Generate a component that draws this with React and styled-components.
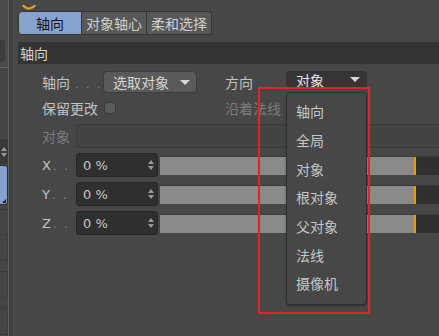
import React from "react";
import styled, { createGlobalStyle } from "styled-components";

const GlobalStyle = createGlobalStyle`
  html, body {
    margin: 0;
    padding: 0;
    background: #474747;
  }
`;

const CJK = `"Noto Sans CJK SC", "Noto Sans", sans-serif`;
const LATIN = `"DejaVu Sans", "Noto Sans", sans-serif`;

const Page = styled.div`
  display: flex;
  width: 439px;
  height: 336px;
  overflow: hidden;
  background: #474747;
  font-family: ${CJK};
  font-size: 14px;
  color: #c4c4c4;
`;

/* left neighbour panel, mostly cut off */
const Side = styled.div`
  width: 8px;
  display: flex;
  flex-direction: column;
  border-right: 1px solid #5f5f5f;
  background: #454545;
`;

const SideTop = styled.div`
  height: 68px;
  padding-top: 40px;
  box-sizing: border-box;
  background: #4b4b4b;
  border-bottom: 1px solid #676767;
`;

const SideInner = styled.div`
  width: 5px;
  height: 22px;
  background: #3e3e3e;
  border-radius: 0 3px 3px 0;
`;

const SideSpin = styled.div`
  margin-top: 71px;
  height: 25px;
  background: #383838;
  border-radius: 0 3px 3px 0;
  display: flex;
  flex-direction: column;
  align-items: center;
  justify-content: center;
  gap: 2px;
`;

const SideBlue = styled.div`
  position: relative;
  margin-top: 1px;
  height: 38px;
  background: #86a2cc;
  border: 1px solid #2c2c2c;
  border-left: none;
  border-radius: 0 3px 3px 0;
`;

const Corner = styled.div`
  position: absolute;
  right: 1px;
  bottom: 1px;
  width: 0;
  height: 0;
  border-left: 4px solid transparent;
  border-bottom: 4px solid #1d1d1d;
`;

const SideLine = styled.div`
  margin-top: 4px;
  height: 1px;
  background: #363636;
`;

const SideSlot = styled.div`
  margin-top: ${(p) => p.$gap}px;
  height: 25px;
  border: 1px solid #3d3d3d;
  border-left: none;
`;

const Gutter = styled.div`
  width: 4px;
  background: #424242;
  border-right: 1px solid #525252;
`;

const Main = styled.div`
  flex: 1;
  display: flex;
  flex-direction: column;
  padding-left: 4px;
  min-width: 0;
`;

const TopStrip = styled.div`
  height: 11px;
  padding-left: 4px;
`;

const Tabs = styled.div`
  display: flex;
  height: 24px;
`;

const Tab = styled.div`
  width: ${(p) => p.$w}px;
  box-sizing: border-box;
  display: flex;
  align-items: center;
  justify-content: center;
  background: ${(p) => (p.$active ? "#87a3cd" : "#585858")};
  color: ${(p) => (p.$active ? "#141414" : "#cfcfcf")};
  border: 1px solid #353535;
  border-left-width: ${(p) => (p.$first ? 1 : 0)}px;
  border-radius: ${(p) =>
    p.$first ? "4px 0 0 4px" : p.$last ? "0 4px 4px 0" : "0"};
  font-size: 14px;
`;

const Header = styled.div`
  margin-top: 7px;
  height: 22px;
  background: #333333;
  padding-left: 2px;
  display: flex;
  align-items: center;
  color: #d2d2d2;
  font-size: 14px;
`;

const Body = styled.div`
  display: flex;
  flex-direction: column;
  padding-left: 24px;
`;

const Row = styled.div`
  display: flex;
  align-items: center;
  height: ${(p) => p.$h}px;
  margin-top: ${(p) => p.$mt}px;
`;

const Cell = styled.div`
  display: flex;
  align-items: center;
  width: ${(p) => (p.$w ? `${p.$w}px` : "auto")};
  height: 100%;
`;

const Label = styled.div`
  width: ${(p) => p.$w}px;
  flex-shrink: 0;
  white-space: nowrap;
  color: ${(p) => (p.$dim ? "#7b7b7b" : "#c2c2c2")};
  font-family: ${(p) => (p.$latin ? LATIN : CJK)};
  font-size: ${(p) => (p.$latin ? "13px" : "14px")};
`;

const Dots = styled.span`
  font-family: ${LATIN};
  font-size: 11px;
  color: #8c8c8c;
  letter-spacing: 2px;
  margin-left: ${(p) => p.$ml ?? 5}px;
`;

const DropWrap = styled.div`
  position: relative;
  align-self: flex-start;
`;

const Dropdown = styled.div`
  width: ${(p) => p.$w}px;
  height: ${(p) => p.$h}px;
  box-sizing: border-box;
  display: flex;
  align-items: center;
  justify-content: space-between;
  padding: 0 6px 0 9px;
  background: ${(p) => (p.$open ? "#353535" : "#5a5a5a")};
  color: ${(p) => (p.$open ? "#e6e6e6" : "#d6d6d6")};
  border: 1px solid ${(p) => (p.$open ? "#333333" : "#3c3c3c")};
  border-radius: 4px;
  font-size: 14px;
`;

const Arrow = styled.div`
  width: 0;
  height: 0;
  border-left: 5px solid transparent;
  border-right: 5px solid transparent;
  border-top: 5px solid #d8d8d8;
`;

const Menu = styled.div`
  position: absolute;
  left: 0;
  top: 21px;
  width: 81px;
  height: 213px;
  box-sizing: border-box;
  padding-top: 4px;
  background: #474747;
  border: 1px solid #2e2e2e;
  border-radius: 4px;
  box-shadow: 0 1px 2px rgba(0, 0, 0, 0.35);
  z-index: 2;
`;

const MenuItem = styled.div`
  height: 28.7px;
  display: flex;
  align-items: center;
  padding-left: 9px;
  color: #c6c6c6;
  font-size: 14px;
`;

const Marker = styled.div`
  position: absolute;
  left: -28px;
  top: 16px;
  width: 112px;
  height: 227px;
  box-sizing: border-box;
  border: 2px solid #e4222b;
  pointer-events: none;
  z-index: 3;
`;

const Check = styled.div`
  width: 12px;
  height: 12px;
  background: #5a5a5a;
  border: 1px solid #3a3a3a;
  border-radius: 3px;
  box-sizing: border-box;
`;

const LinkField = styled.div`
  flex: 1;
  height: 24px;
  box-sizing: border-box;
  background: #434343;
  border: 1px solid #3a3a3a;
  border-right: none;
  border-radius: 3px 0 0 3px;
`;

const NumField = styled.div`
  width: 82px;
  height: 24px;
  box-sizing: border-box;
  display: flex;
  align-items: center;
  justify-content: space-between;
  padding: 0 3px 0 6px;
  background: #2f2f2f;
  border: 1px solid #272727;
  border-radius: 3px;
  font-family: ${LATIN};
  font-size: 13px;
  color: #c8c8c8;
`;

const Spin = styled.div`
  display: flex;
  flex-direction: column;
  gap: 2px;
  align-items: center;
`;

const SpinTri = styled.div`
  width: 0;
  height: 0;
  border-left: 3px solid transparent;
  border-right: 3px solid transparent;
  ${(p) =>
    p.$up
      ? "border-bottom: 4px solid #9a9a9a;"
      : "border-top: 4px solid #9a9a9a;"}
`;

const Slider = styled.div`
  flex: 1;
  margin-left: 2px;
  height: 18px;
  display: flex;
  background: #303030;
  border-top: 1px solid #3a3a3a;
`;

const Fill = styled.div`
  width: 254px;
  background: #8a8a8a;
  border-right: 2px solid #e89e0c;
`;

const TopIcon = () => (
  <svg width="16" height="11" viewBox="0 0 16 11">
    <path
      d="M1 0 Q4 5 9 3 Q12 2 13 0"
      fill="none"
      stroke="#e8a21c"
      strokeWidth="2.2"
      strokeLinecap="round"
    />
  </svg>
);

const menuItems = ["轴向", "全局", "对象", "根对象", "父对象", "法线", "摄像机"];

function NumberRow({ axis }) {
  return (
    <Row $h={24} $mt={5}>
      <Label $w={34} $latin>
        {axis}
        <Dots $ml={2}>. .</Dots>
      </Label>
      <NumField>
        <span>0 %</span>
        <Spin>
          <SpinTri $up />
          <SpinTri />
        </Spin>
      </NumField>
      <Slider>
        <Fill />
      </Slider>
    </Row>
  );
}

export default function App() {
  return (
    <>
      <GlobalStyle />
      <Page>
        <Side>
          <SideTop>
            <SideInner />
          </SideTop>
          <SideSpin>
            <SpinTri $up />
            <SpinTri />
          </SideSpin>
          <SideBlue>
            <Corner />
          </SideBlue>
          <SideLine />
          <SideSlot $gap={24} />
          <SideSlot $gap={10} />
          <SideSlot $gap={10} />
        </Side>
        <Gutter />
        <Main>
          <TopStrip>
            <TopIcon />
          </TopStrip>
          <Tabs>
            <Tab $w={64} $active $first>
              轴向
            </Tab>
            <Tab $w={65}>对象轴心</Tab>
            <Tab $w={65} $last>
              柔和选择
            </Tab>
          </Tabs>
          <Header>轴向</Header>
          <Body>
            <Row $h={22} $mt={7}>
              <Cell $w={183}>
                <Label $w={61}>
                  轴向<Dots>. . .</Dots>
                </Label>
                <Dropdown $w={94} $h={22}>
                  <span>选取对象</span>
                  <Arrow />
                </Dropdown>
              </Cell>
              <Cell>
                <Label $w={61}>
                  方向<Dots>. . .</Dots>
                </Label>
                <DropWrap>
                  <Dropdown $w={81} $h={17} $open>
                    <span>对象</span>
                    <Arrow />
                  </Dropdown>
                  <Menu>
                    {menuItems.map((m) => (
                      <MenuItem key={m}>{m}</MenuItem>
                    ))}
                  </Menu>
                  <Marker />
                </DropWrap>
              </Cell>
            </Row>
            <Row $h={16} $mt={7}>
              <Cell $w={183}>
                <Label $w={62}>保留更改</Label>
                <Check />
              </Cell>
              <Cell>
                <Label $w={61} $dim>
                  沿着法线
                </Label>
              </Cell>
            </Row>
            <Row $h={24} $mt={8}>
              <Label $w={34} $dim>
                对象
              </Label>
              <LinkField />
            </Row>
            <NumberRow axis="X" />
            <NumberRow axis="Y" />
            <NumberRow axis="Z" />
          </Body>
        </Main>
      </Page>
    </>
  );
}
